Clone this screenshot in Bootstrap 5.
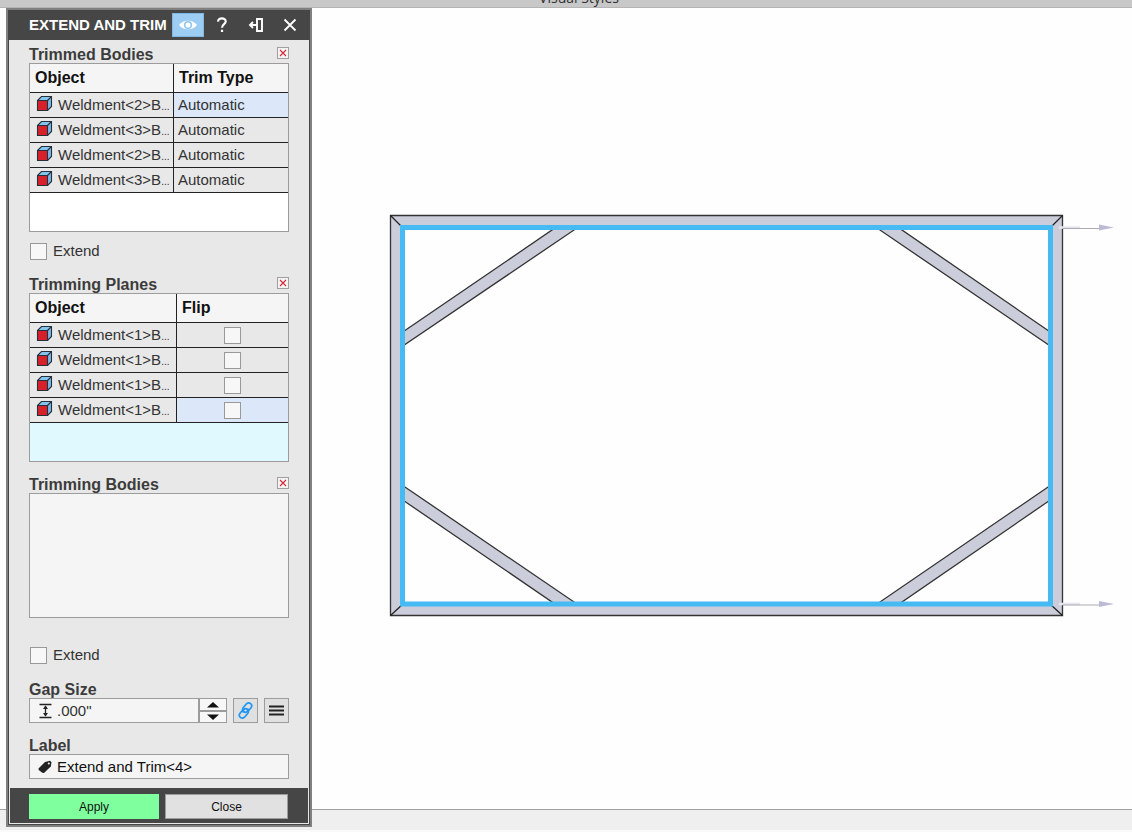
<!DOCTYPE html>
<html lang="en">
<head>
<meta charset="utf-8">
<meta name="viewport" content="width=device-width, initial-scale=1">
<title>Extend and Trim</title>
<link href="https://cdn.jsdelivr.net/npm/bootstrap@5.3.0/dist/css/bootstrap.min.css" rel="stylesheet">
<style>
  body { font-family: "Liberation Sans", Arial, sans-serif; font-size: 15px; line-height: 18px; color: #333; background: #fefefe; }
  .ribbon { height: 8px; background: #c8c8c8; border-bottom: 1px solid #b4b4b4; font: 14px/18px "Open Sans", sans-serif; color: #333; padding-left: 26px; }
  .workspace { min-height: 0; }
  .statusbar { height: 23px; background: #efefef; border-top: 1px solid #a0a0a0; border-bottom: 2px solid #fafafa; }

  .tool-panel { left: 6px; top: 8px; width: 306px; background: #e8e8e8; border: 2px solid #808080; }
  .panel-frame { border: 1px solid #464646; }
  .panel-head { height: 29px; background: #464646; color: #fff; padding: 0 0 2px 20px; }
  .panel-head h1 { font-size: 15px; line-height: 18px; width: 143px; flex-shrink: 0; }
  .head-btn { width: 32px; height: 24px; border: 1px solid transparent; border-radius: 0; padding: 0; margin-right: 2px; color: #fff; line-height: 0; flex-shrink: 0; }
  .head-btn.on { background: #9dcdf3; border-color: #7fb8e4; }
  .panel-body { padding: 4px 20px 9px; }
  .group-title { font-size: 16px; line-height: 18px; font-weight: 700; color: #3c3c3c; margin: 0; padding-top: 2px; height: 19px; }
  .clear-btn { width: 12px; height: 12px; border: 1px solid #a0a0a0; border-radius: 0; background: #f3f3f3; padding: 0; line-height: 0; margin-top: 3px; }

  .list-box { border: 1px solid #9c9c9c; background: #fff; height: 169px; overflow: hidden; }
  .list-box.active-box { background: #e0f9ff; }
  .list-box.empty-box { background: #f5f5f5; height: 125px; }
  .grid-table { table-layout: fixed; border-collapse: separate; border-spacing: 0; width: 100%; }
  .grid-table th, .grid-table td { border-bottom: 1px solid #222; padding: 0 4px; height: 25px; white-space: nowrap; background: #e8e8e8; color: #333; }
  .grid-table th { height: 29px; background: #f5f5f5; color: #111; padding: 0 5px; font-size: 16px; }
  .grid-table th:first-child, .grid-table td:first-child { border-right: 1px solid #222; }
  .grid-table td:first-child { padding: 0 0 0 6px; }
  .grid-table td.picked { background: #dce8fa; }
  .col-trim { width: 144px; }
  .col-plane { width: 147px; }
  .dots { font-size: 10px; }
  .cube { width: 17px; height: 17px; margin-right: 5px; vertical-align: -2px; }

  .form-check-input.box-check { width: 17px; height: 17px; border: 1px solid #999; border-radius: 0; background-color: #f7f7f7; margin: 0; float: none; display: block; }
  .form-check-input.box-check:checked { background-color: #2196f3; }
  .extend-row { padding-left: 1px; gap: 6px; height: 18px; }
  .bodies-extend { margin: 28px 0 15px; }

  .field { height: 25px; border: 1px solid #9c9c9c; background: #f5f5f5; }
  .field .form-control { border: 0; border-radius: 0; background: transparent; box-shadow: none; padding: 0; font-size: 15px; line-height: 18px; min-height: 0; color: #333; min-width: 0; }
  .field .form-control.label-text { color: #111; }
  .spinner { width: 28px; border-left: 2px solid #9c9c9c; }
  .spin-btn { height: 11px; padding: 0; border: 0; border-radius: 0; line-height: 0; background: #f7f7f7; }
  .spin-btn + .spin-btn { border-top: 2px solid #9c9c9c; height: 12px; }
  .tool-btn { width: 25px; height: 25px; margin-left: 6px; flex-shrink: 0; padding: 0; border: 1px solid #9c9c9c; border-radius: 0; background: #e0e0e0; line-height: 0; }
  .name-title { margin-top: 12px; }
  .panel-foot { background: #464646; border: 1px solid #e8e8e8; border-top: 0; padding: 6px 20px 4px 19px; gap: 6px; }
  .foot-btn { height: 25px; border-radius: 0; padding: 0; font-size: 12px; line-height: 16px; color: #111; border: 1px solid #9c9c9c; background: #e1e1e1; }
  .foot-btn.apply { background: #80ff9f; border-color: #80ff9f; }
  .close-panel { width: 123px; }
</style>
</head>
<body>
<svg class="d-none" aria-hidden="true">
  <symbol id="cube" viewBox="0 0 17 17">
    <path d="M2 5.500 6 1.500H15.500L11.500 5.500Z" fill="#84c4ee"/>
    <path d="M11.500 5.500 15.500 1.500V11.500L11.500 15.500Z" fill="#7db8e2"/>
    <path d="M1.500 5.500H11.500V15.500H1.500Z" fill="#d6202a"/>
    <path d="M1.500 5.500H11.500V15.500H1.500ZM1.500 5.500 5.500 1.500H15.500V11.500L11.500 15.500M11.500 5.500 15.500 1.500" fill="none" stroke="#25303c" stroke-width="1.100"/>
  </symbol>
  <symbol id="cross" viewBox="0 0 10 10">
    <path d="M2 2 8 8M8 2 2 8" stroke="#d22b3b" stroke-width="1.100"/>
  </symbol>
</svg>

<div class="d-flex flex-column vh-100 overflow-hidden position-relative">
  <header class="ribbon d-flex flex-shrink-0 justify-content-center align-items-end overflow-hidden"><span>Visual Styles</span></header>

  <main class="workspace flex-grow-1">
    <svg class="d-block w-100 h-100" viewBox="0 8 1132 801" role="img" aria-label="Frame with four corner braces">
      <path d="M390.500 215.500H1062.500V615.500H390.500Z" fill="#cbcdda" stroke="#333" stroke-width="1.300"/>
      <path d="M402 227H1051V604H402Z" fill="#fefefe"/>
      <g fill="#cbcdda" stroke="#333" stroke-width="1.300">
        <path d="M402 332.500 555 228H577L402 346.500Z"/>
        <path d="M1051 332.500 899 228H877L1051 346.500Z"/>
        <path d="M402 485 577 604H555L402 499.500Z"/>
        <path d="M1051 485 877 604H899L1051 499.500Z"/>
      </g>
      <path d="M390.500 215.500 403 228M1062.500 215.500 1050 228M390.500 615.500 403 604M1062.500 615.500 1050 604" stroke="#222" stroke-width="1.300"/>
      <path d="M402.500 227.500H1050.500V604H402.500Z" fill="none" stroke="#46baf3" stroke-width="5"/>
      <g>
        <path d="M1059 227.500H1080M1059 604H1080" stroke="#e6e6ee" stroke-width="2.500"/>
        <path d="M1063 228.500H1100M1063 605H1100" stroke="#aaa9b4" stroke-width="1"/>
        <path d="M1099 224.500 1114 227.500 1099 230.500ZM1099 601 1114 604 1099 607Z" fill="#bcbbd6"/>
      </g>
    </svg>
  </main>
  <footer class="statusbar flex-shrink-0"></footer>

  <section class="tool-panel position-absolute">
    <div class="panel-frame">
      <div class="panel-head d-flex align-items-center">
        <h1 class="fw-bold m-0 text-nowrap">EXTEND AND TRIM</h1>
        <button type="button" class="btn head-btn on" aria-label="Preview">
          <svg width="20" height="14" viewBox="0 0 20 14"><path d="M1 7C5 1.200 15 1.200 19 7 15 12.800 5 12.800 1 7Z" fill="#fff"/><circle cx="10" cy="7" r="3.300" fill="none" stroke="#8fc4ee" stroke-width="1.500"/></svg>
        </button>
        <button type="button" class="btn head-btn" aria-label="Help">
          <svg width="14" height="18" viewBox="0 0 12 16"><path d="M2.500 5C2.300 1.200 9.500 1.200 9.300 4.900 9.200 7.300 6 7.200 6 10.500" fill="none" stroke="#fff" stroke-width="1.900"/><path d="M5 12.200H7V14.200H5Z" fill="#fff"/></svg>
        </button>
        <button type="button" class="btn head-btn" aria-label="Dock">
          <svg width="16" height="16" viewBox="0 0 16 16" fill="none" stroke="#fff"><path d="M9 2H14V14H9Z" stroke-width="1.900"/><path d="M9 8H2M5 5 2 8 5 11" stroke-width="1.900"/></svg>
        </button>
        <button type="button" class="btn head-btn" aria-label="Close panel">
          <svg width="14" height="14" viewBox="0 0 14 14"><path d="M1.500 1.500 12.500 12.500M12.500 1.500 1.500 12.500" stroke="#fff" stroke-width="1.800"/></svg>
        </button>
      </div>

      <div class="panel-body">
        <div class="d-flex justify-content-between align-items-start">
          <h2 class="group-title">Trimmed Bodies</h2>
          <button type="button" class="btn clear-btn" aria-label="Clear trimmed bodies"><svg width="10" height="10"><use href="#cross"/></svg></button>
        </div>
        <div class="list-box">
          <table class="grid-table">
            <colgroup><col class="col-trim"><col></colgroup>
            <thead><tr><th>Object</th><th>Trim Type</th></tr></thead>
            <tbody>
              <tr><td><svg class="cube"><use href="#cube"/></svg>Weldment&lt;2&gt;B<span class="dots">...</span></td><td class="picked">Automatic</td></tr>
              <tr><td><svg class="cube"><use href="#cube"/></svg>Weldment&lt;3&gt;B<span class="dots">...</span></td><td>Automatic</td></tr>
              <tr><td><svg class="cube"><use href="#cube"/></svg>Weldment&lt;2&gt;B<span class="dots">...</span></td><td>Automatic</td></tr>
              <tr><td><svg class="cube"><use href="#cube"/></svg>Weldment&lt;3&gt;B<span class="dots">...</span></td><td>Automatic</td></tr>
            </tbody>
          </table>
        </div>
        <div class="extend-row d-flex align-items-center mt-2 mb-3 pt-1">
          <input class="form-check-input box-check" type="checkbox" id="extend1"><label for="extend1">Extend</label>
        </div>

        <div class="d-flex justify-content-between align-items-start">
          <h2 class="group-title">Trimming Planes</h2>
          <button type="button" class="btn clear-btn" aria-label="Clear trimming planes"><svg width="10" height="10"><use href="#cross"/></svg></button>
        </div>
        <div class="list-box active-box">
          <table class="grid-table">
            <colgroup><col class="col-plane"><col></colgroup>
            <thead><tr><th>Object</th><th>Flip</th></tr></thead>
            <tbody>
              <tr><td><svg class="cube"><use href="#cube"/></svg>Weldment&lt;1&gt;B<span class="dots">...</span></td><td><input class="form-check-input box-check mx-auto" type="checkbox" aria-label="Flip plane 1"></td></tr>
              <tr><td><svg class="cube"><use href="#cube"/></svg>Weldment&lt;1&gt;B<span class="dots">...</span></td><td><input class="form-check-input box-check mx-auto" type="checkbox" aria-label="Flip plane 2"></td></tr>
              <tr><td><svg class="cube"><use href="#cube"/></svg>Weldment&lt;1&gt;B<span class="dots">...</span></td><td><input class="form-check-input box-check mx-auto" type="checkbox" aria-label="Flip plane 3"></td></tr>
              <tr><td><svg class="cube"><use href="#cube"/></svg>Weldment&lt;1&gt;B<span class="dots">...</span></td><td class="picked"><input class="form-check-input box-check mx-auto" type="checkbox" aria-label="Flip plane 4"></td></tr>
            </tbody>
          </table>
        </div>

        <div class="d-flex justify-content-between align-items-start mt-2 pt-1">
          <h2 class="group-title">Trimming Bodies</h2>
          <button type="button" class="btn clear-btn" aria-label="Clear trimming bodies"><svg width="10" height="10"><use href="#cross"/></svg></button>
        </div>
        <div class="list-box empty-box"></div>
        <div class="extend-row bodies-extend d-flex align-items-center">
          <input class="form-check-input box-check" type="checkbox" id="extend2"><label for="extend2">Extend</label>
        </div>

        <label class="group-title d-block" for="gap">Gap Size</label>
        <div class="d-flex">
          <div class="field d-flex flex-grow-1 align-items-center ps-2">
            <svg class="flex-shrink-0 me-1" width="15" height="16" viewBox="0 0 15 16"><path d="M1.500 1.500H13.500M1.500 14.500H13.500M7.500 3V13" stroke="#222" stroke-width="1.300"/><path d="M5 6 7.500 2.500 10 6ZM5 10 7.500 13.500 10 10Z" fill="#222"/></svg>
            <input class="form-control flex-grow-1" id="gap" type="text" value=".000&quot;">
            <div class="spinner d-flex flex-column flex-shrink-0">
              <button type="button" class="btn spin-btn" aria-label="Increase gap"><svg width="12" height="6"><path d="M0 5.500 6 0 12 5.500Z" fill="#111"/></svg></button>
              <button type="button" class="btn spin-btn" aria-label="Decrease gap"><svg width="12" height="6"><path d="M0 .5 6 6 12 .5Z" fill="#111"/></svg></button>
            </div>
          </div>
          <button type="button" class="btn tool-btn" aria-label="Link value">
            <svg width="19" height="19" viewBox="0 0 19 19" fill="none" stroke="#2196f3" stroke-width="1.700" stroke-linecap="round" stroke-linejoin="round"><path d="M8 10.800C6.300 9.300 6.400 7.600 7.500 6.300L10.500 2.800C13.200 .3 17.300 3.600 15 6.800L12.300 10"/><path d="M11 8.200C12.700 9.700 12.600 11.400 11.500 12.700L8.500 16.200C5.800 18.700 1.700 15.400 4 12.200L6.700 9"/><path d="M8 10.800C9 11.700 10.300 11.300 11 10.500L12.800 8.300M11 8.200C10 7.300 8.700 7.700 8 8.500L6.200 10.700"/></svg>
          </button>
          <button type="button" class="btn tool-btn" aria-label="Options">
            <svg width="15" height="11" viewBox="0 0 15 11"><path d="M0 1.500H15M0 5.500H15M0 9.500H15" stroke="#222" stroke-width="2"/></svg>
          </button>
        </div>

        <label class="group-title d-block name-title" for="name">Label</label>
        <div class="field d-flex align-items-center ps-2">
          <svg class="flex-shrink-0 me-1" width="15" height="16" viewBox="0 0 15 16"><path d="M.5 9.500 7 3 12 1.800 13.500 3.200 12.800 7.500 6 14 4.300 13.800.7 11Z" fill="#222"/><circle cx="10.800" cy="4.500" r="1" fill="#f5f5f5"/></svg>
          <input class="form-control label-text" id="name" type="text" value="Extend and Trim&lt;4&gt;">
        </div>
      </div>

      <div class="panel-foot d-flex">
        <button type="button" class="btn foot-btn apply flex-grow-1">Apply</button>
        <button type="button" class="btn foot-btn close-panel">Close</button>
      </div>
    </div>
  </section>
</div>
<script src="https://cdn.jsdelivr.net/npm/bootstrap@5.3.0/dist/js/bootstrap.bundle.min.js"></script>
</body>
</html>
